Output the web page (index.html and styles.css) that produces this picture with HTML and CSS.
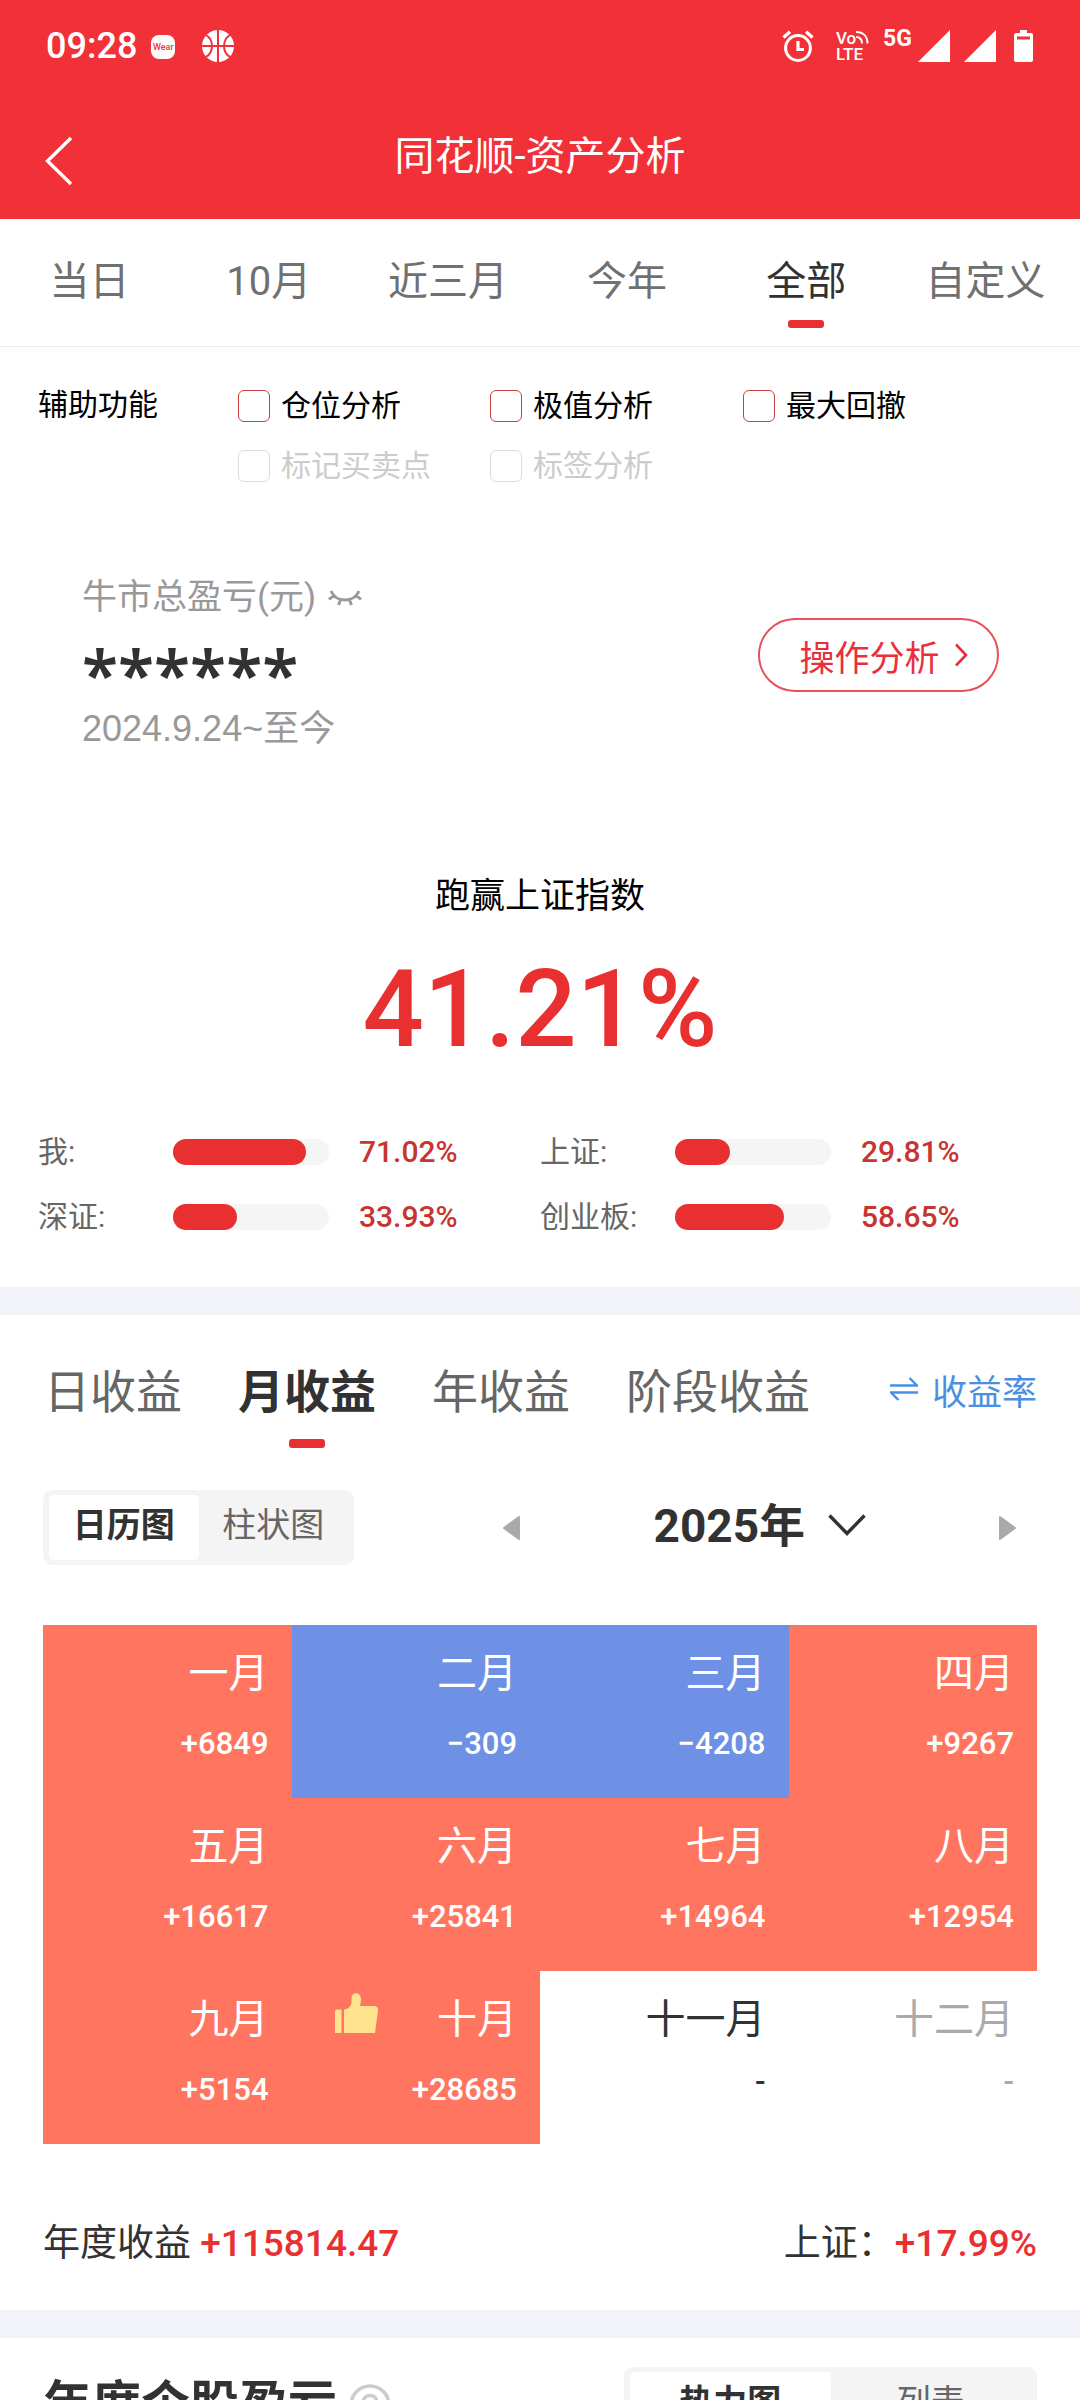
FILE: index.html
```html
<!DOCTYPE html>
<html lang="zh-CN">
<head>
<meta charset="utf-8">
<meta name="viewport" content="width=device-width, initial-scale=1">
<title>同花顺-资产分析</title>
<link rel="stylesheet" href="styles.css">
</head>
<body>
<div class="app">
  <header class="header">
    <div class="status">
      <span class="status-time">09:28</span>
      <span class="wear">Wear</span>
      <svg class="icon-ball" width="32" height="32" viewBox="0 0 32 32" aria-hidden="true">
        <circle cx="16" cy="16" r="16" fill="#fff"/>
        <path d="M16 0v32M0 16h32M4 5c8 5 8 17 0 22M28 5c-8 5-8 17 0 22" fill="none" stroke="#f23038" stroke-width="2"/>
      </svg>
      <div class="status-right">
        <svg class="icon-alarm" width="32" height="32" viewBox="0 0 32 32" fill="none" stroke="#fff" aria-hidden="true">
          <circle cx="16" cy="18" r="12.4" stroke-width="3"/>
          <path d="M16 11v8.500h6" stroke-width="3.200"/>
          <path d="M1.500 7.500l6.500-5.800M30.500 7.500l-6.500-5.800" stroke-width="3.400"/>
        </svg>
        <div class="volte">
          <span class="volte-top">Vo<svg width="14" height="14" viewBox="0 0 14 14" fill="none" stroke="#fff" stroke-width="2" aria-hidden="true"><path d="M0 7c4 0 6 2.500 6 6.500M0 2c7.500 0 11.500 4.500 11.500 11.500"/></svg></span>
          <span>LTE</span>
        </div>
        <span class="net">5G</span>
        <svg class="signal" width="32" height="32" viewBox="0 0 32 32" aria-hidden="true"><path d="M32 0v32H0z" fill="#fff"/></svg>
        <svg class="signal" width="32" height="32" viewBox="0 0 32 32" aria-hidden="true"><path d="M32 0v32H0z" fill="#fff"/></svg>
        <svg class="battery" width="19" height="32" viewBox="0 0 19 32" aria-hidden="true"><path fill="#fff" fill-rule="evenodd" d="M6 0h7v3h4a2 2 0 0 1 2 2v25a2 2 0 0 1-2 2H2a2 2 0 0 1-2-2V5a2 2 0 0 1 2-2h4zM3 6.500v3h13v-3z"/></svg>
      </div>
    </div>
    <div class="nav">
      <button class="back" type="button" aria-label="返回">
        <svg width="28" height="50" viewBox="0 0 28 50" fill="none" stroke="#fff" stroke-width="3.400" aria-hidden="true"><path d="M26 2L2.500 25 26 48"/></svg>
      </button>
      <h1 class="title">同花顺-资产分析</h1>
    </div>
  </header>

  <main class="content">
    <nav class="range-tabs">
      <button type="button">当日</button>
      <button type="button">10月</button>
      <button type="button">近三月</button>
      <button type="button">今年</button>
      <button type="button" class="active">全部</button>
      <button type="button">自定义</button>
    </nav>

    <section class="options">
      <span class="options-title">辅助功能</span>
      <label class="option"><input type="checkbox">仓位分析</label>
      <label class="option"><input type="checkbox">极值分析</label>
      <label class="option"><input type="checkbox">最大回撤</label>
      <label class="option second"><input type="checkbox" disabled>标记买卖点</label>
      <label class="option"><input type="checkbox" disabled>标签分析</label>
    </section>

    <section class="profit">
      <div class="profit-info">
        <div class="profit-label">牛市总盈亏(元)
          <svg width="34" height="18" viewBox="0 0 34 18" fill="none" stroke="#999" stroke-width="3" aria-hidden="true"><path d="M3 2C8 14 26 14 31 2M5.500 6.500L1 10.500M28.500 6.500L33 10.500M12.500 11l-2 5M21.500 11l2 5"/></svg>
        </div>
        <div class="profit-value">******</div>
        <div class="profit-date">2024.9.24~至今</div>
      </div>
      <button class="analyse" type="button">操作分析
        <svg width="14" height="24" viewBox="0 0 14 24" fill="none" stroke="#e8303c" stroke-width="2.600" aria-hidden="true"><path d="M2 1.500L12 12 2 22.500"/></svg>
      </button>
    </section>

    <section class="index">
      <h2 class="index-title">跑赢上证指数</h2>
      <div class="index-value">41.21%</div>
      <div class="bars">
        <div class="bar-row"><span>我:</span><div class="track"><div class="fill" style="width:85%"></div></div><b>71.02%</b></div>
        <div class="bar-row"><span>上证:</span><div class="track"><div class="fill" style="width:35%"></div></div><b>29.81%</b></div>
        <div class="bar-row"><span>深证:</span><div class="track"><div class="fill" style="width:41%"></div></div><b>33.93%</b></div>
        <div class="bar-row"><span>创业板:</span><div class="track"><div class="fill" style="width:70%"></div></div><b>58.65%</b></div>
      </div>
    </section>

    <section class="returns">
      <div class="returns-head">
        <nav class="returns-tabs">
          <button type="button">日收益</button>
          <button type="button" class="active">月收益</button>
          <button type="button">年收益</button>
          <button type="button">阶段收益</button>
        </nav>
        <button class="rate" type="button">
          <svg width="28" height="24" viewBox="0 0 28 24" fill="none" stroke="#4a90e2" stroke-width="2.400" aria-hidden="true"><path d="M0 8.500h27L19.500 1M28 15.500H1L8.500 23"/></svg>
          收益率
        </button>
      </div>

      <div class="toolbar">
        <div class="segment">
          <button type="button" class="active">日历图</button>
          <button type="button">柱状图</button>
        </div>
        <div class="year-nav">
          <button type="button" aria-label="上一年"><svg width="19" height="26" viewBox="0 0 19 26" aria-hidden="true"><path d="M17 2v22L2 13z" fill="#aaa" stroke="#aaa" stroke-width="2" stroke-linejoin="round"/></svg></button>
          <div class="year">
            <select aria-label="年份"><option>2025年</option><option>2024年</option></select>
            <svg width="38" height="22" viewBox="0 0 38 22" fill="none" stroke="#323232" stroke-width="3.400" aria-hidden="true"><path d="M1.500 1.500L19 19.500 36.500 1.500"/></svg>
          </div>
          <button type="button" aria-label="下一年"><svg width="19" height="26" viewBox="0 0 19 26" aria-hidden="true"><path d="M2 2v22l15-11z" fill="#aaa" stroke="#aaa" stroke-width="2" stroke-linejoin="round"/></svg></button>
        </div>
      </div>

      <div class="calendar">
        <div class="month up"><span>一月</span><b>+6849</b></div>
        <div class="month down"><span>二月</span><b>−309</b></div>
        <div class="month down"><span>三月</span><b>−4208</b></div>
        <div class="month up"><span>四月</span><b>+9267</b></div>
        <div class="month up"><span>五月</span><b>+16617</b></div>
        <div class="month up"><span>六月</span><b>+25841</b></div>
        <div class="month up"><span>七月</span><b>+14964</b></div>
        <div class="month up"><span>八月</span><b>+12954</b></div>
        <div class="month up"><span>九月</span><b>+5154</b></div>
        <div class="month up best">
          <svg width="44" height="40" viewBox="0 0 44 40" fill="#ffe38f" aria-hidden="true"><path d="M0 18.500q0-2 2-2H6.500V40H0zM9 40V16.500c4.500-.5 7.500-3.500 7.500-8V5c0-6.500 9.500-6.500 9.500 1.500 0 2.500-.8 4.500-.8 6.500H39c3 0 4.500 2 4 4.500L40 40z"/></svg>
          <span>十月</span><b>+28685</b>
        </div>
        <div class="month current"><span>十一月</span><b>-</b></div>
        <div class="month future"><span>十二月</span><b>-</b></div>
      </div>

      <div class="summary">
        <p>年度收益 <b>+115814.47</b></p>
        <p>上证：<b>+17.99%</b></p>
      </div>
    </section>

    <section class="stocks">
      <h2 class="stocks-title">年度个股盈亏
        <svg width="42" height="42" viewBox="0 0 42 42" fill="none" stroke="#ccc" stroke-width="3.600" aria-hidden="true"><circle cx="21" cy="21" r="19"/><path d="M14.500 17.500c0-8 13-8 13 0 0 4.500-6.500 5-6.500 9.500M21 30v4"/></svg>
      </h2>
      <div class="segment wide">
        <button type="button" class="active">热力图</button>
        <button type="button">列表</button>
      </div>
    </section>
  </main>
</div>
</body>
</html>
```

FILE: styles.css
```css
* {
  box-sizing: border-box;
}

body {
  margin: 0;
  background: #fff;
  color: #323232;
  font-family: Roboto, "Noto Sans CJK SC", sans-serif;
  font-weight: 400;
}

h1, h2, p {
  margin: 0;
  font-weight: 400;
}

b {
  font-weight: 500;
}

button, select {
  margin: 0;
  padding: 0;
  border: 0;
  background: none;
  color: inherit;
  font: inherit;
  cursor: pointer;
}

svg {
  display: block;
  flex: none;
}

.app {
  display: flex;
  flex-direction: column;
  height: 100vh;
}

.content {
  flex: 1;
  min-height: 0;
  overflow-y: auto;
  scrollbar-width: none;
}

/* Header */
.header {
  flex: none;
  background: #f23038;
  color: #fff;
}

.status {
  display: flex;
  align-items: center;
  height: 92px;
  padding: 0 47px 0 46px;
}

.status-time {
  font-size: 36px;
  font-weight: 500;
}

.wear {
  width: 24px;
  height: 24px;
  margin: 2px 27px 0 14px;
  border-radius: 8px;
  background: #fff;
  color: #f23038;
  font-size: 9px;
  font-weight: 500;
  line-height: 24px;
  text-align: center;
}

.status-right {
  display: flex;
  align-items: center;
  margin-left: auto;
}

.volte {
  display: flex;
  flex-direction: column;
  width: 36px;
  margin: 0 11px 0 22px;
  font-size: 17px;
  font-weight: 500;
  line-height: 16px;
}

.volte-top {
  display: flex;
}

.net {
  align-self: flex-start;
  width: 35px;
  font-size: 23px;
  font-weight: 700;
  line-height: 18px;
}

.signal {
  margin-right: 14px;
}

.battery {
  margin-left: 4px;
}

.nav {
  display: grid;
  grid-template-columns: 100px 1fr 100px;
  align-items: center;
  height: 127px;
}

.back {
  padding: 10px 0 0 45px;
}

.title {
  padding-bottom: 6px;
  font-size: 40px;
  text-align: center;
}

/* Range tabs */
.range-tabs {
  display: grid;
  grid-template-columns: repeat(6, 1fr);
  height: 128px;
  padding: 0 5px 9px 0;
  border-bottom: 1px solid #eee;
  color: #707070;
  font-size: 40px;
}

.range-tabs .active,
.returns-tabs .active {
  position: relative;
  color: #323232;
}

.range-tabs .active::after,
.returns-tabs .active::after {
  content: "";
  position: absolute;
  left: 50%;
  bottom: 9px;
  width: 36px;
  height: 8px;
  margin-left: -18px;
  border-radius: 3px;
  background: #e93030;
}

/* Options */
.options {
  display: grid;
  grid-template-columns: 200px 252px 253px 1fr;
  row-gap: 28px;
  padding: 43px 38px 0;
  color: #000;
  font-size: 30px;
  line-height: 30px;
}

.option {
  display: flex;
  align-items: center;
  gap: 11px;
  height: 32px;
}

.second {
  grid-column: 2;
}

.option input {
  appearance: none;
  width: 32px;
  height: 32px;
  margin: 0;
  border: 1px solid #c8403c;
  border-radius: 6px;
  background: #fff;
}

.option:has(input:disabled) {
  color: #ccc;
}

.option input:disabled {
  border-color: #ddd;
}

/* Total profit */
.profit {
  display: flex;
  justify-content: space-between;
  align-items: flex-start;
  padding: 90px 81px 0 82px;
}

.profit-label {
  display: flex;
  align-items: center;
  gap: 12px;
  color: #999;
  font-size: 35px;
  line-height: 52px;
}

.profit-value {
  height: 79px;
  font-family: "Noto Sans", sans-serif;
  font-size: 66px;
  font-weight: 600;
  line-height: 98px;
}

.profit-date {
  color: #999;
  font-family: "Liberation Sans", "Noto Sans CJK SC", sans-serif;
  font-size: 36px;
  line-height: 52px;
}

.analyse {
  display: flex;
  align-items: center;
  justify-content: center;
  gap: 14px;
  width: 241px;
  height: 74px;
  margin-top: 46px;
  padding-left: 10px;
  border: 2px solid #e8505a;
  border-radius: 37px;
  color: #e8303c;
  font-size: 35px;
}

/* Index comparison */
.index {
  padding: 116px 38px 48px;
  border-bottom: 28px solid #f2f3f8;
}

.index-title {
  color: #000;
  font-size: 35px;
  line-height: 52px;
  text-align: center;
}

.index-value {
  margin-top: 26px;
  color: #e93030;
  font-size: 108px;
  font-weight: 500;
  line-height: 120px;
  text-align: center;
}

.bars {
  display: grid;
  grid-template-columns: 1fr 1fr;
  gap: 21px 0;
  margin-top: 61px;
  font-size: 30px;
  line-height: 44px;
}

.bar-row {
  display: grid;
  grid-template-columns: 135px 156px 1fr;
  align-items: center;
  color: #666;
}

.bar-row b {
  padding-left: 30px;
  color: #c8342f;
}

.track {
  height: 26px;
  border-radius: 13px;
  background: #f4f6f6;
}

.fill {
  height: 100%;
  border-radius: 13px;
  background: #e93030;
}

/* Returns */
.returns {
  padding: 47px 43px 38px;
  border-bottom: 28px solid #f2f3f8;
}

.returns-head {
  display: flex;
  justify-content: space-between;
  align-items: center;
}

.returns-tabs {
  display: flex;
  gap: 56px;
  padding-left: 1px;
  color: #666;
  font-size: 46px;
  line-height: 60px;
}

.returns-tabs .active {
  font-weight: 700;
}

.returns-tabs .active::after {
  bottom: -26px;
  height: 9px;
}

.rate {
  display: flex;
  align-items: center;
  gap: 14px;
  padding-bottom: 6px;
  color: #4a90e2;
  font-size: 35px;
}

.toolbar {
  display: flex;
  align-items: center;
  margin-top: 68px;
}

.segment {
  display: grid;
  grid-template-columns: 1fr 1fr;
  flex: none;
  width: 311px;
  height: 75px;
  padding: 5px 6px;
  border-radius: 9px;
  background: #f4f4f4;
  color: #666;
  font-size: 34px;
}

.segment button {
  padding-bottom: 10px;
}

.segment .active {
  border-radius: 5px;
  background: #fff;
  color: #323232;
  font-weight: 700;
}

.segment.wide {
  width: 413px;
}

.year-nav {
  display: flex;
  flex: 1;
  align-items: center;
  justify-content: space-between;
  padding: 0 20px 0 148px;
}

.year {
  position: relative;
}

.year select {
  appearance: none;
  width: 212px;
  height: 64px;
  padding-bottom: 4px;
  font-size: 46px;
  font-weight: 700;
}

.year svg {
  position: absolute;
  right: 0;
  top: 18px;
  pointer-events: none;
}

/* Calendar */
.calendar {
  display: grid;
  grid-template-columns: repeat(4, 1fr);
  grid-auto-rows: 173px;
  margin-top: 60px;
}

.month {
  position: relative;
  display: flex;
  flex-direction: column;
  align-items: flex-end;
  gap: 14px;
  padding: 21px 23px 0 0;
  color: #fff;
}

.month span {
  font-size: 40px;
  line-height: 56px;
}

.month b {
  font-size: 31px;
  line-height: 56px;
}

.up {
  background: #ff755f;
}

.down {
  background: #6e91e5;
}

.month.current,
.month.future {
  gap: 6px;
}

.month.current {
  color: #323232;
}

.month.future {
  color: #aaa;
}

.best svg {
  position: absolute;
  left: 43px;
  top: 22px;
}

.summary {
  display: flex;
  justify-content: space-between;
  margin-top: 72px;
  font-size: 37px;
  line-height: 56px;
}

.summary b {
  color: #e93030;
}

/* Stocks */
.stocks {
  display: flex;
  justify-content: space-between;
  align-items: center;
  padding: 29px 43px 40px;
}

.stocks-title {
  display: flex;
  align-items: center;
  gap: 12px;
  font-size: 49px;
  font-weight: 700;
  line-height: 64px;
}
```
